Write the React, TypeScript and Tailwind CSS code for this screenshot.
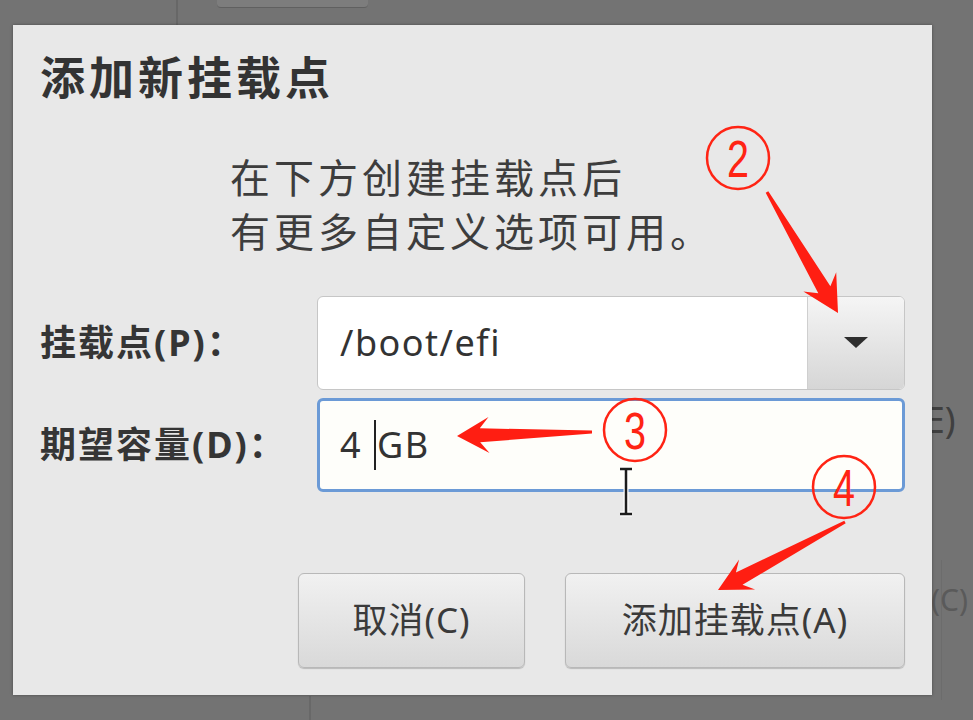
type Pt = [number, number]

// tapered red arrow: thin tail, swept-back head
const arrowPoints = (tail: Pt, tip: Pt, headLen: number, headHalf: number) => {
  const dx = tip[0] - tail[0]
  const dy = tip[1] - tail[1]
  const len = Math.hypot(dx, dy)
  const ux = dx / len
  const uy = dy / len
  const nx = -uy
  const ny = ux
  const bx = tip[0] - ux * headLen
  const by = tip[1] - uy * headLen
  const jx = bx + ux * 9
  const jy = by + uy * 9
  const pts: Pt[] = [
    [tail[0] + nx * 1.5, tail[1] + ny * 1.5],
    [jx + nx * 7, jy + ny * 7],
    [bx + nx * headHalf, by + ny * headHalf],
    tip,
    [bx - nx * headHalf, by - ny * headHalf],
    [jx - nx * 7, jy - ny * 7],
    [tail[0] - nx * 1.5, tail[1] - ny * 1.5],
  ]
  return pts.map((p) => `${p[0].toFixed(1)},${p[1].toFixed(1)}`).join(' ')
}

const marks = [
  { n: '2', cx: 738, cy: 158 },
  { n: '3', cx: 635, cy: 430 },
  { n: '4', cx: 844, cy: 487 },
]

const Annotations: React.FC = () => (
  <svg
    className="pointer-events-none absolute inset-0 z-20"
    width={973}
    height={720}
    viewBox="0 0 973 720"
  >
    <polygon points={arrowPoints([767, 192], [838, 313], 36, 19)} fill="#ff1e12" />
    <polygon points={arrowPoints([592, 432], [457, 436], 32, 18)} fill="#ff1e12" />
    <polygon points={arrowPoints([845, 522], [718, 590], 33, 17)} fill="#ff1e12" />
    {marks.map((m) => (
      <g key={m.n}>
        <circle cx={m.cx} cy={m.cy} r={31} fill="none" stroke="#ff2414" strokeWidth={2.5} />
        <text
          x={m.cx - 11}
          y={m.cy + 19}
          fontSize={52}
          fill="#ff2414"
          fontFamily="'Liberation Sans', sans-serif"
          textLength={22}
          lengthAdjust="spacingAndGlyphs"
        >
          {m.n}
        </text>
      </g>
    ))}
    {/* I-beam mouse cursor */}
    <g>
      <path d="M620 469 H632 M626 469 V514 M620 514 H632" stroke="#ffffff" strokeWidth={5} />
      <path d="M620 469 H632 M626 469 V514 M620 514 H632" stroke="#1c1c1c" strokeWidth={2.5} />
    </g>
  </svg>
)

const App: React.FC = () => {
  return (
    <div className="relative h-[720px] w-[973px] overflow-hidden bg-[#737373] pl-[13px] pt-[25px] font-['Noto_Sans','Noto_Sans_CJK_SC',sans-serif]">
      {/* window behind the dialog */}
      <div className="absolute left-[176px] top-0 h-[26px] w-[2px] bg-[#676767]" />
      <div className="absolute left-[217px] top-0 h-[8px] w-[151px] rounded-b-[4px] border-b border-[#606060] bg-[#7d7d7d]" />
      <div className="absolute left-[309px] top-[696px] h-[24px] w-[2px] bg-[#686868]" />
      <div className="absolute left-[941px] top-[560px] h-[140px] w-px bg-[#6c6c6c]" />
      <span className="absolute left-[914px] top-[396px] text-[36px] leading-[48px] text-[#3f3f3f]">
        (E)
      </span>
      <span className="absolute left-[931px] top-[580px] text-[30px] leading-[40px] text-[#5a5a5a]">
        (C)
      </span>

      <div className="relative z-10 flex h-[670px] w-[919px] flex-col bg-[#e8e8e8] px-[27px] pt-[31px] shadow-[0_0_3px_rgba(0,0,0,0.35)]">
        <h1 className="h-[44px] text-[45px] font-bold leading-[44px] tracking-[4px] text-[#333]">
          添加新挂载点
        </h1>
        <p className="ml-[190px] mt-[51px] text-[40px] leading-[54px] tracking-[4px] text-[#3d3d3d]">
          在下方创建挂载点后
          <br />
          有更多自定义选项可用。
        </p>

        <div className="mt-[37px] grid grid-cols-[277px_1fr] gap-y-[8px]">
          <label className="flex items-center text-[36px] font-bold tracking-[2px] text-[#353535]">
            挂载点(P)：
          </label>
          <div className="flex h-[94px] overflow-hidden rounded-[6px] border border-[#c6c6c6] bg-white">
            <div className="flex flex-1 items-center pl-[22px] text-[36px] tracking-[1.5px] text-[#333]">
              /boot/efi
            </div>
            <div className="flex w-[97px] items-center justify-center border-l border-[#cfcfcf] bg-gradient-to-b from-[#f5f5f5] to-[#d6d6d6]">
              <svg width="24" height="12" viewBox="0 0 24 12">
                <polygon points="0,0 24,0 12,11" fill="#2e2e2e" />
              </svg>
            </div>
          </div>

          <label className="flex items-center text-[36px] font-bold tracking-[2px] text-[#353535]">
            期望容量(D)：
          </label>
          <div className="flex h-[94px] items-center rounded-[6px] border-[3px] border-[#6b9ad6] bg-[#fefefa] pl-[20px] text-[36px] tracking-[1.5px] text-[#333]">
            <span>4&nbsp;</span>
            <span className="mx-px inline-block h-[50px] w-[2px] bg-[#222]" />
            <span>GB</span>
          </div>
        </div>

        <div className="mt-[81px] flex justify-end gap-[40px]">
          <button className="flex h-[95px] w-[227px] items-center justify-center rounded-[6px] border border-[#b8b8b8] bg-gradient-to-b from-[#f1f1f1] to-[#d9d9d9] text-[35px] tracking-[1px] text-[#3a3a3a] shadow-[0_1px_1px_rgba(0,0,0,0.2)]">
            取消(C)
          </button>
          <button className="flex h-[95px] w-[340px] items-center justify-center rounded-[6px] border border-[#b8b8b8] bg-gradient-to-b from-[#f1f1f1] to-[#d9d9d9] text-[35px] tracking-[1px] text-[#3a3a3a] shadow-[0_1px_1px_rgba(0,0,0,0.2)]">
            添加挂载点(A)
          </button>
        </div>
      </div>

      <Annotations />
    </div>
  )
}

export default App
